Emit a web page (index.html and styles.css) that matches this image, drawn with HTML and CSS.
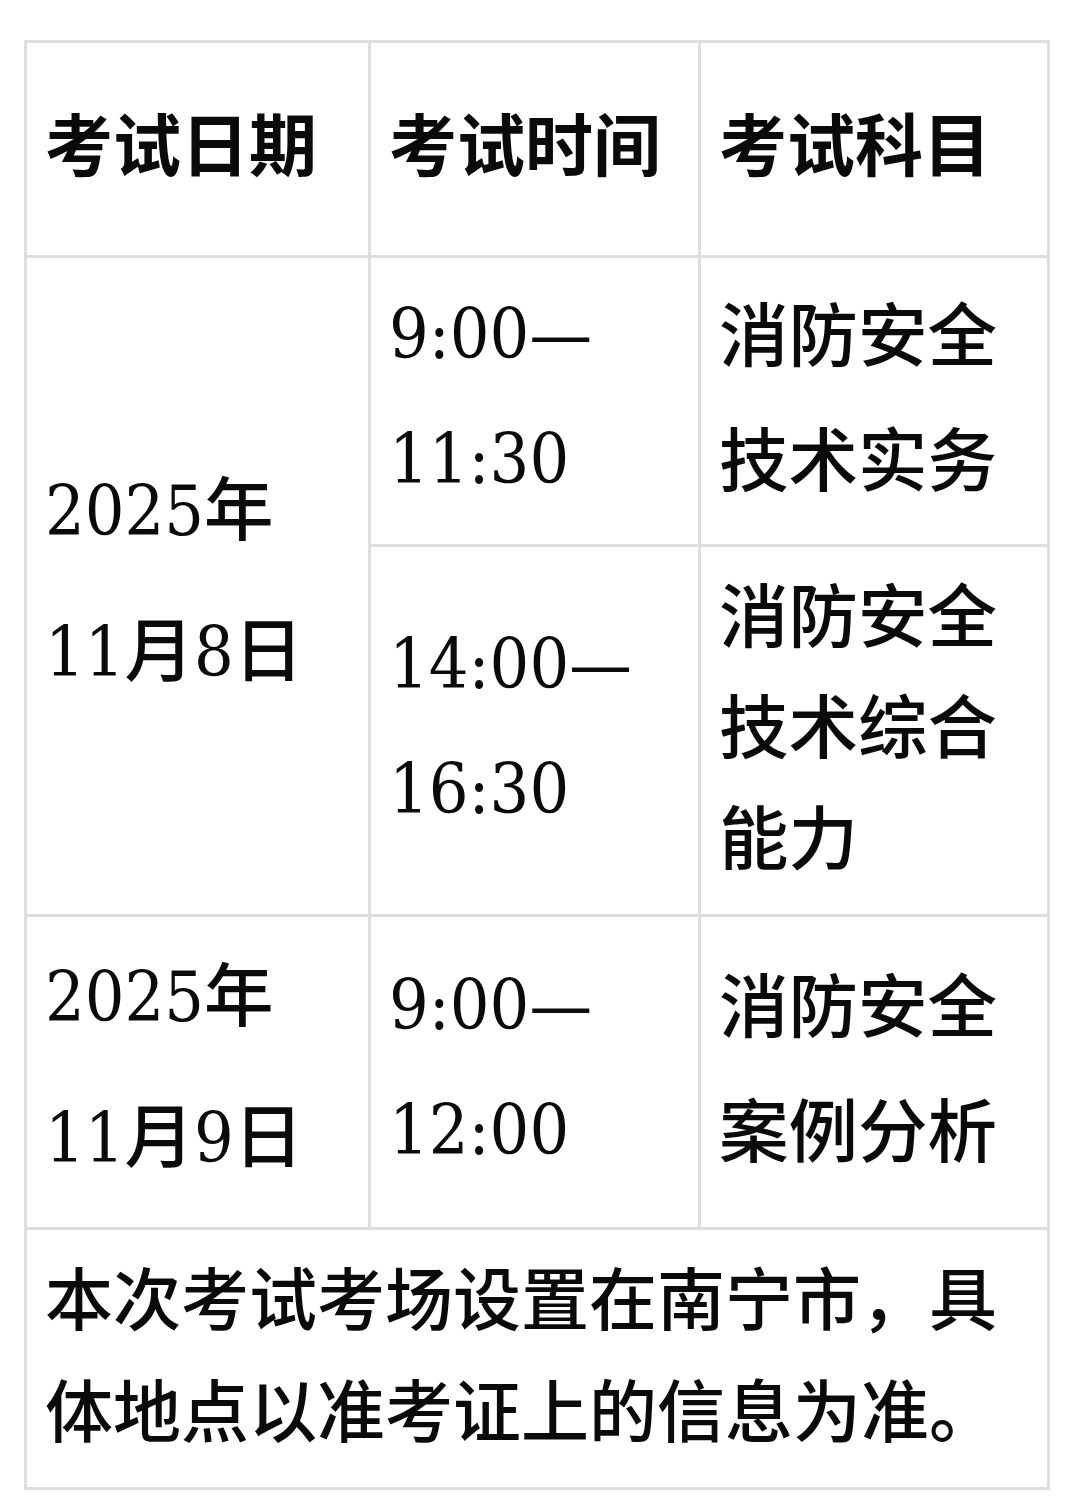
FILE: index.html
```html
<!DOCTYPE html>
<html lang="zh-CN">
<head>
<meta charset="utf-8">
<title>考试安排</title>
<link rel="stylesheet" href="styles.css">
</head>
<body>
<div class="schedule">
  <div class="cell head">考试日期</div>
  <div class="cell head">考试时间</div>
  <div class="cell head">考试科目</div>

  <div class="cell date span-2">2025年<br>11月8日</div>
  <div class="cell time">9:00—11:30</div>
  <div class="cell subject">消防安全技术实务</div>

  <div class="cell time">14:00—16:30</div>
  <div class="cell subject tight">消防安全技术综合能力</div>

  <div class="cell date">2025年<br>11月9日</div>
  <div class="cell time">9:00—12:00</div>
  <div class="cell subject">消防安全案例分析</div>

  <div class="cell note">本次考试考场设置在南宁市，具体地点以准考证上的信息为准。</div>
</div>
</body>
</html>
```

FILE: styles.css
```css
html, body {
  margin: 0;
  padding: 0;
  background: #ffffff;
}

body {
  padding: 40px 0 0 24px;
  font-family: "DejaVu Serif Condensed", "DejaVu Serif", "Noto Sans CJK SC", serif;
  font-stretch: condensed;
  font-size: 69.5px;
  font-weight: 500;
  color: #0a0a0a;
}

.schedule {
  display: grid;
  width: 1026px;
  box-sizing: border-box;
  grid-template-columns: 341px 327px 346px;
  grid-template-rows: 212px 286px 367px 310px 257px;
  gap: 3px;
  padding: 3px;
  background: #dedede;
}

.cell {
  background: #ffffff;
  padding: 0 18px 10px;
  display: block;
  align-content: center;
}

.head {
  font-family: "Noto Sans CJK SC", sans-serif;
  font-size: 68px;
  font-weight: 700;
  line-height: 1.2;
  padding-bottom: 15px;
}

.span-2 {
  grid-row: span 2;
}

.date {
  line-height: 141px;
}

.time {
  line-height: 125px;
}

.subject {
  font-family: "Noto Sans CJK SC", sans-serif;
  line-height: 125px;
  padding-bottom: 16px;
}

.subject.tight {
  line-height: 111px;
}

.note {
  grid-column: 1 / -1;
  font-family: "Noto Sans CJK SC", sans-serif;
  font-size: 68px;
  line-height: 112px;
  padding-bottom: 13px;
}
```
